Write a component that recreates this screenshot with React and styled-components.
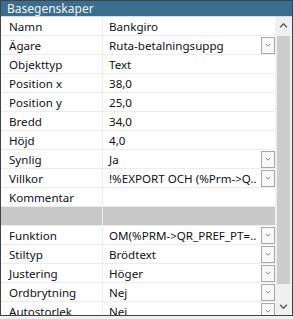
import styled, { createGlobalStyle } from "styled-components";

const GlobalStyle = createGlobalStyle`
  html, body {
    margin: 0;
    padding: 0;
    background: #f0f0f0;
  }
  body {
    font-family: "Segoe UI", "Noto Sans", "Liberation Sans", sans-serif;
    font-size: 11.6px;
  }
`;

const Frame = styled.div`
  width: 293px;
  height: 316px;
  box-sizing: border-box;
  border: 1px solid #3f4347;
  background: #fff;
  display: flex;
  flex-direction: column;
  overflow: hidden;
`;

const Header = styled.div`
  height: 16px;
  flex: none;
  background: #3b6d8e;
  color: #f4f4f4;
  padding-left: 6px;
  line-height: 15px;
  font-size: 12px;
  border-bottom: 1px solid #d8dde2;
  box-sizing: border-box;
`;

const Body = styled.div`
  flex: 1;
  display: flex;
  min-height: 0;
`;

const Grid = styled.div`
  flex: 1;
  overflow: hidden;
`;

const Row = styled.div`
  display: grid;
  grid-template-columns: 102px 1fr;
  height: 19px;
  box-sizing: border-box;
  border-bottom: 1px solid #ececec;
  background: ${(p) => (p.$section ? "#c8c8c8" : "#fff")};
`;

const Cell = styled.div`
  display: flex;
  align-items: center;
  min-width: 0;
  color: #101018;
  white-space: nowrap;
  overflow: hidden;
`;

const NameCell = styled(Cell)`
  padding-left: 8px;
  border-right: 1px solid #ececec;
`;

const ValueCell = styled(Cell)`
  padding-left: 6px;
  justify-content: space-between;
`;

const DropButton = styled.div`
  width: 14px;
  height: 17px;
  box-sizing: border-box;
  border: 1px solid #a8a8a8;
  background: #f7f7f7;
  display: flex;
  align-items: center;
  justify-content: center;
  flex: none;
`;

const Scrollbar = styled.div`
  width: 17px;
  flex: none;
  background: #f0f0f0;
  display: flex;
  flex-direction: column;
  align-items: center;
`;

const Arrow = styled.div`
  height: 17px;
  width: 17px;
  display: flex;
  align-items: center;
  justify-content: center;
  flex: none;
`;

const Track = styled.div`
  flex: 1;
  width: 100%;
  display: flex;
  flex-direction: column;
  align-items: center;
`;

const Thumb = styled.div`
  width: 13px;
  height: 248px;
  margin-top: 2px;
  background: #cdcdcd;
`;

const Chevron = ({ up, size = 7, color = "#606060", stroke = 1.4 }) => (
  <svg width={size} height={size} viewBox="0 0 8 8">
    <path
      d={up ? "M1 5.5 L4 2.5 L7 5.5" : "M1 2.5 L4 5.5 L7 2.5"}
      fill="none"
      stroke={color}
      strokeWidth={stroke}
    />
  </svg>
);

const rows = [
  ["Namn", "Bankgiro"],
  ["Ägare", "Ruta-betalningsuppg", true],
  ["Objekttyp", "Text"],
  ["Position x", "38,0"],
  ["Position y", "25,0"],
  ["Bredd", "34,0"],
  ["Höjd", "4,0"],
  ["Synlig", "Ja", true],
  ["Villkor", "!%EXPORT OCH (%Prm->Q..", true],
  ["Kommentar", ""],
  null,
  ["Funktion", "OM(%PRM->QR_PREF_PT=..", true],
  ["Stiltyp", "Brödtext", true],
  ["Justering", "Höger", true],
  ["Ordbrytning", "Nej", true],
  ["Autostorlek", "Nej", true],
];

export default function App() {
  return (
    <>
      <GlobalStyle />
      <Frame>
        <Header>Basegenskaper</Header>
        <Body>
          <Grid>
            {rows.map((r, i) =>
              r ? (
                <Row key={i}>
                  <NameCell>{r[0]}</NameCell>
                  <ValueCell>
                    <span>{r[1]}</span>
                    {r[2] && (
                      <DropButton>
                        <Chevron size={6} color="#8a8a8a" stroke={1.3} />
                      </DropButton>
                    )}
                  </ValueCell>
                </Row>
              ) : (
                <Row key={i} $section>
                  <NameCell />
                  <ValueCell />
                </Row>
              )
            )}
          </Grid>
          <Scrollbar>
            <Arrow>
              <Chevron up size={9} />
            </Arrow>
            <Track>
              <Thumb />
            </Track>
            <Arrow>
              <Chevron size={9} />
            </Arrow>
          </Scrollbar>
        </Body>
      </Frame>
    </>
  );
}
